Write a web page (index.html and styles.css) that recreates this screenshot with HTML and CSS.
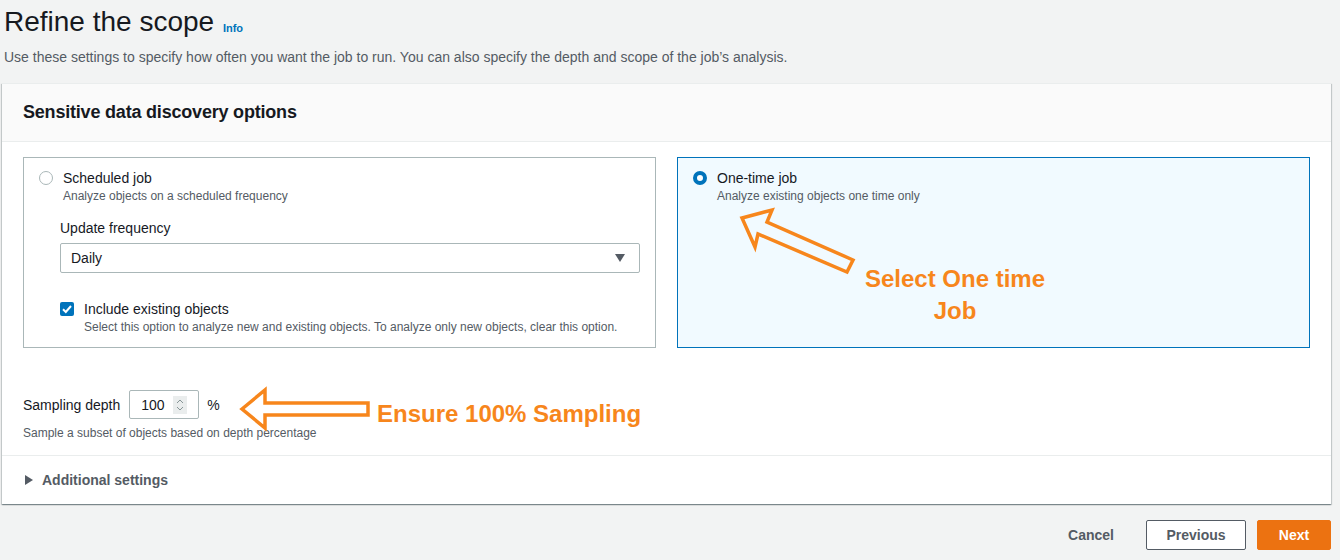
FILE: index.html
```html
<!DOCTYPE html>
<html lang="en">
<head>
    <meta charset="UTF-8">
    <meta name="viewport" content="width=device-width, initial-scale=1.0">
    <title>Refine the scope</title>
    <link rel="stylesheet" href="styles.css">
</head>
<body>
    <div class="page">
        <!-- Titre de la page -->
        <div class="page-header">
            <h1 class="title">Refine the scope <a class="info" href="#">Info</a></h1>
            <p class="subtitle">Use these settings to specify how often you want the job to run. You can also specify the depth and scope of the job’s analysis.</p>
        </div>

        <!-- Conteneur principal -->
        <div class="container">
            <div class="container-header">Sensitive data discovery options</div>

            <div class="container-body">
                <div class="tiles">
                    <div class="tile">
                        <div class="option">
                            <span class="radio"></span>
                            <div>
                                <div class="option-label">Scheduled job</div>
                                <div class="option-desc">Analyze objects on a scheduled frequency</div>
                            </div>
                        </div>
                        <div class="nested">
                            <div class="field-label">Update frequency</div>
                            <div class="select">
                                <span>Daily</span>
                                <svg class="caret" width="10" height="8" viewBox="0 0 10 8"><path d="M0 0h10L5 8z" fill="#545b64"/></svg>
                            </div>
                            <div class="check-row">
                                <span class="checkbox">
                                    <svg width="14" height="14" viewBox="0 0 14 14"><path d="M3 7.2l2.8 2.8L11 4" fill="none" stroke="#fff" stroke-width="2"/></svg>
                                </span>
                                <div>
                                    <div class="option-label">Include existing objects</div>
                                    <div class="option-desc">Select this option to analyze new and existing objects. To analyze only new objects, clear this option.</div>
                                </div>
                            </div>
                        </div>
                    </div>

                    <div class="tile selected">
                        <div class="option">
                            <span class="radio checked"></span>
                            <div>
                                <div class="option-label">One-time job</div>
                                <div class="option-desc">Analyze existing objects one time only</div>
                            </div>
                        </div>
                    </div>
                </div>

                <div class="sampling">
                    <div class="sampling-row">
                        <span class="field-label">Sampling depth</span>
                        <div class="number">
                            <span>100</span>
                            <span class="spinner">
                                <svg width="10" height="16" viewBox="0 0 10 16"><path d="M2 6l3-3 3 3M2 10l3 3 3-3" fill="none" stroke="#879596" stroke-width="1"/></svg>
                            </span>
                        </div>
                        <span class="percent">%</span>
                    </div>
                    <div class="option-desc">Sample a subset of objects based on depth percentage</div>
                </div>
            </div>

            <div class="expander">
                <svg width="8" height="10" viewBox="0 0 8 10"><path d="M0 0l8 5-8 5z" fill="#545b64"/></svg>
                <span>Additional settings</span>
            </div>
        </div>

        <!-- Boutons du bas -->
        <div class="actions">
            <a class="btn-link" href="#">Cancel</a>
            <button class="btn">Previous</button>
            <button class="btn primary">Next</button>
        </div>
    </div>

    <!-- Annotations par-dessus -->
    <svg class="annotations" width="1340" height="560" viewBox="0 0 1340 560">
        <polygon points="742,218 772,210 767,222 853,260 847,272 758,234 755,247" fill="none" stroke="#f7861c" stroke-width="3.5" stroke-linejoin="miter"/>
        <polygon points="242,409 265,390 265,403 368,403 368,415 265,415 265,428" fill="none" stroke="#f7861c" stroke-width="3.5" stroke-linejoin="miter"/>
    </svg>
    <div class="note note-job">Select One time<br>Job</div>
    <div class="note note-sampling">Ensure 100% Sampling</div>
</body>
</html>
```

FILE: styles.css
```css
/* Styles globaux */
body, html {
    margin: 0;
    padding: 0;
    font-family: 'Liberation Sans', Arial, sans-serif;
    background: #f2f3f3;
    color: #16191f;
    overflow: hidden;
    height: 100%;
}

.page {
    padding: 0 9px 0 2px;
}

/* En-tête */
.page-header {
    padding-left: 2px;
}

.title {
    margin: 0;
    padding-top: 4px;
    font-size: 28px;
    line-height: 36px;
    font-weight: 400;
    color: #16191f;
}

.info {
    font-size: 11px;
    font-weight: 700;
    color: #0073bb;
    text-decoration: none;
    margin-left: 1px;
    vertical-align: -1px;
}

.subtitle {
    margin: 1px 0 0;
    font-size: 14px;
    line-height: 20px;
    color: #545b64;
}

/* Conteneur */
.container {
    margin-top: 16px;
    background: #fff;
    border-top: 1px solid #eaeded;
    box-shadow: 0 1px 1px 0 rgba(0, 28, 36, 0.3), 1px 1px 1px 0 rgba(0, 28, 36, 0.15), -1px 1px 1px 0 rgba(0, 28, 36, 0.15);
}

.container-header {
    background: #fafafa;
    border-bottom: 1px solid #eaeded;
    padding: 0 21px;
    height: 57px;
    line-height: 57px;
    font-size: 18px;
    font-weight: 700;
    letter-spacing: -0.2px;
    color: #16191f;
}

.container-body {
    padding: 15px 21px 14px;
    border-bottom: 1px solid #eaeded;
}

.tiles {
    display: grid;
    grid-template-columns: 1fr 1fr;
    gap: 21px;
}

.tile {
    border: 1px solid #aab7b8;
    padding: 10px 15px 13px 15px;
    height: 191px;
    box-sizing: border-box;
    background: #fff;
}

.tile.selected {
    border-color: #0073bb;
    background: #f1faff;
}

.option {
    display: flex;
    align-items: flex-start;
    gap: 10px;
}

.radio {
    flex: none;
    width: 14px;
    height: 14px;
    margin-top: 3px;
    border: 1px solid #aab7b8;
    border-radius: 50%;
    box-sizing: border-box;
    background: #fff;
}

.radio.checked {
    border: 4px solid #0073bb;
}

.option-label {
    font-size: 14px;
    line-height: 20px;
    color: #16191f;
}

.option-desc {
    font-size: 12px;
    line-height: 16px;
    color: #545b64;
}

.nested {
    margin: 14px 0 0 21px;
}

.field-label {
    font-size: 14px;
    line-height: 20px;
    color: #16191f;
}

.select {
    margin-top: 5px;
    height: 30px;
    box-sizing: border-box;
    border: 1px solid #aab7b8;
    border-radius: 2px;
    display: flex;
    align-items: center;
    justify-content: space-between;
    padding: 0 14px 0 10px;
    font-size: 14px;
}

.check-row {
    display: flex;
    align-items: flex-start;
    gap: 10px;
    margin-top: 26px;
}

.checkbox {
    flex: none;
    width: 14px;
    height: 14px;
    margin-top: 3px;
    background: #0073bb;
    border-radius: 2px;
    display: flex;
}

/* Échantillonnage */
.sampling {
    margin-top: 42px;
}

.sampling-row {
    display: flex;
    align-items: center;
    gap: 8px;
}

.number {
    width: 70px;
    height: 29px;
    margin-left: 1px;
    box-sizing: border-box;
    border: 1px solid #aab7b8;
    border-radius: 2px;
    background: #fff;
    display: flex;
    align-items: center;
    justify-content: space-between;
    padding: 0 11px 0 11px;
    font-size: 14px;
}

.spinner {
    width: 14px;
    height: 18px;
    background: #eaeded;
    display: flex;
    align-items: center;
    justify-content: center;
}

.percent {
    font-size: 14px;
}

.sampling .option-desc {
    margin-top: 6px;
}

/* Paramètres additionnels */
.expander {
    height: 48px;
    display: flex;
    align-items: center;
    gap: 9px;
    padding-left: 23px;
    font-size: 14px;
    font-weight: 700;
    color: #545b64;
}

/* Boutons */
.actions {
    display: flex;
    justify-content: flex-end;
    align-items: center;
    margin-top: 16px;
    gap: 11px;
}

.btn-link {
    font-size: 14px;
    font-weight: 700;
    color: #545b64;
    text-decoration: none;
    margin-right: 21px;
}

.btn {
    height: 30px;
    width: 100px;
    border: 1px solid #545b64;
    border-radius: 2px;
    background: #fff;
    color: #545b64;
    font-family: inherit;
    font-size: 14px;
    font-weight: 700;
    cursor: pointer;
}

.btn.primary {
    width: 74px;
    background: #ec7211;
    border-color: #ec7211;
    color: #fff;
}

/* Annotations */
.annotations {
    position: absolute;
    top: 0;
    left: 0;
    pointer-events: none;
}

.note {
    position: absolute;
    font-family: 'Liberation Sans', Arial, sans-serif;
    font-weight: 700;
    font-size: 24px;
    line-height: 32px;
    color: #f7861c;
    text-align: center;
}

.note-job {
    left: 835px;
    top: 263px;
    width: 240px;
}

.note-sampling {
    left: 377px;
    top: 398px;
}
```
